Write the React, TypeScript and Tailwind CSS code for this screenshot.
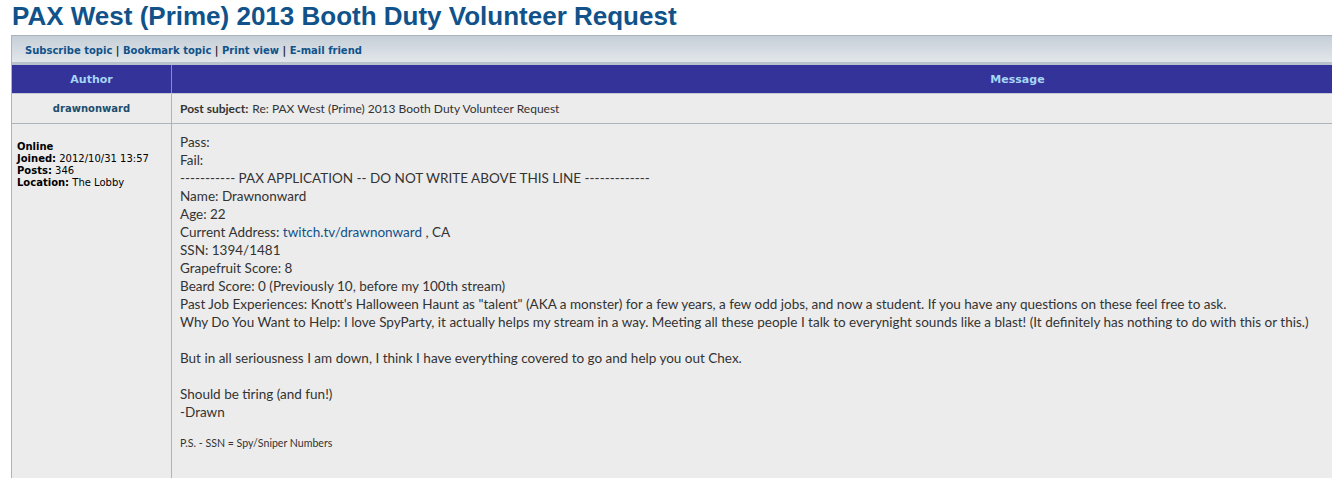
import React from "react";

const body = { fontFamily: '"Lato", "Open Sans", sans-serif' };
const small = { fontFamily: '"DejaVu Sans", Verdana, sans-serif' };

function TopicLinks() {
  const links = ["Subscribe topic", "Bookmark topic", "Print view", "E-mail friend"];
  return (
    <div className="h-[29px] flex items-center pl-[13px] pt-[2px] bg-gradient-to-b from-[#c5ced7] to-[#e3e7eb] border-b-[3px] border-[#b7c2cb]">
      <span className="text-[10px] font-bold text-[#105289]" style={small}>
        {links.map((l, i) => (
          <React.Fragment key={l}>
            {i > 0 && <span className="text-[#222]"> | </span>}
            <a href="#">{l}</a>
          </React.Fragment>
        ))}
      </span>
    </div>
  );
}

const postLines: React.ReactNode[] = [
  "Pass:",
  "Fail:",
  "----------- PAX APPLICATION -- DO NOT WRITE ABOVE THIS LINE -------------",
  "Name: Drawnonward",
  "Age: 22",
  <>
    Current Address: <a href="#" className="text-[#105289]">twitch.tv/drawnonward</a> , CA
  </>,
  "SSN: 1394/1481",
  "Grapefruit Score: 8",
  "Beard Score: 0 (Previously 10, before my 100th stream)",
  'Past Job Experiences: Knott\'s Halloween Haunt as "talent" (AKA a monster) for a few years, a few odd jobs, and now a student. If you have any questions on these feel free to ask.',
  "Why Do You Want to Help: I love SpyParty, it actually helps my stream in a way. Meeting all these people I talk to everynight sounds like a blast! (It definitely has nothing to do with this or this.)",
  "",
  "But in all seriousness I am down, I think I have everything covered to go and help you out Chex.",
  "",
  "Should be tiring (and fun!)",
  "-Drawn",
];

export default function App() {
  return (
    <div className="w-[1332px] h-[478px] overflow-hidden bg-white">
      <h1
        className="pl-[12px] pt-[1px] h-[35px] text-[26px] leading-[30px] font-bold text-[#105289] whitespace-nowrap"
        style={{ fontFamily: '"Liberation Sans", Arial, sans-serif' }}
      >
        PAX West (Prime) 2013 Booth Duty Volunteer Request
      </h1>

      <div className="ml-[11px] w-[1852px] border-l border-t border-[#a9b6c0]">
        <TopicLinks />

        {/* header row */}
        <div className="grid grid-cols-[160px_1fr] h-[29px] bg-[#333399] border-b border-[#c3cad2] text-[11px] font-bold text-[#a6d6f5]" style={small}>
          <div className="flex items-center justify-center pt-[2px] border-r border-[#8c8cc4]">Author</div>
          <div className="flex items-center justify-center pt-[2px]">Message</div>
        </div>

        {/* subject row */}
        <div className="grid grid-cols-[160px_1fr] h-[30px] bg-[#ececec] border-b border-[#a9b6c0]">
          <div className="flex items-center justify-center border-r border-[#a9b6c0] text-[10px] font-bold text-[#1b4e6e]" style={small}>
            drawnonward
          </div>
          <div className="flex items-center pl-[8px] text-[12px] text-[#333]" style={body}>
            <span className="font-bold mr-[4px]">Post subject:</span>
            <span>Re: PAX West (Prime) 2013 Booth Duty Volunteer Request</span>
          </div>
        </div>

        {/* post row */}
        <div className="grid grid-cols-[160px_1fr] h-[400px] bg-[#ececec]">
          <div className="border-r border-[#a9b6c0] pl-[5px] pt-[17px] text-[10px] leading-[12px] text-[#000]" style={small}>
            <div className="font-bold">Online</div>
            <div><b>Joined:</b> 2012/10/31 13:57</div>
            <div><b>Posts:</b> 346</div>
            <div><b>Location:</b> The Lobby</div>
          </div>
          <div className="pl-[8px] pt-[9px] text-[13.5px] leading-[18px] text-[#333]" style={body}>
            {postLines.map((line, i) => (
              <div key={i} className="h-[18px] whitespace-nowrap">{line}</div>
            ))}
            <div className="mt-[16px] text-[10.6px] leading-[12px] text-[#333]">P.S. - SSN = Spy/Sniper Numbers</div>
          </div>
        </div>
      </div>
    </div>
  );
}
